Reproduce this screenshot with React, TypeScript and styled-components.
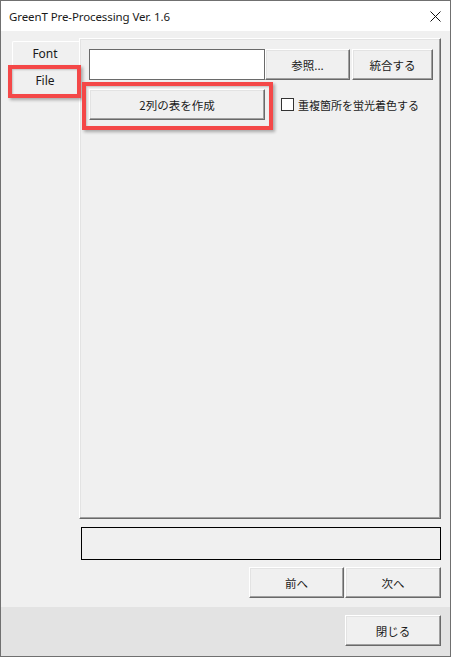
import React from "react";
import styled, { createGlobalStyle } from "styled-components";

const Global = createGlobalStyle`
  html, body { margin: 0; padding: 0; background: #ffffff; }
  * { box-sizing: border-box; }
  body { font-family: "Noto Sans", "Noto Sans CJK JP", sans-serif; }
`;

const Window = styled.div`
  position: relative;
  width: 451px;
  height: 657px;
  border: 1px solid #707070;
  display: flex;
  flex-direction: column;
  background: #f0f0f0;
  overflow: hidden;
`;

const TitleBar = styled.div`
  height: 30px;
  flex: none;
  background: #ffffff;
  display: flex;
  align-items: center;
  justify-content: space-between;
  padding: 0 9px 0 8px;
`;

const TitleText = styled.span`
  font-family: "Noto Sans", sans-serif;
  font-size: 11.5px;
  color: #1a1a1a;
  letter-spacing: -0.1px;
`;

const CloseGlyph = styled.svg`
  width: 11px;
  height: 11px;
  margin-right: 0px;
`;

const Main = styled.div`
  flex: 1;
  display: flex;
  flex-direction: column;
  padding: 7px 9px 0 11px;
`;

const TabControl = styled.div`
  height: 481px;
  display: flex;
`;

const TabStrip = styled.div`
  width: 67px;
  flex: none;
  display: flex;
  flex-direction: column;
  padding-top: 3px;
`;

const Tab = styled.div<{ $h: number; $raised?: boolean }>`
  height: ${(p) => p.$h}px;
  display: flex;
  align-items: center;
  justify-content: center;
  font-family: "Noto Sans", sans-serif;
  font-size: 12px;
  color: #1a1a1a;
  border-top: 1px solid ${(p) => (p.$raised ? "#ffffff" : "transparent")};
  border-left: 1px solid ${(p) => (p.$raised ? "#ffffff" : "transparent")};
  border-top-left-radius: 2px;
  padding-right: 2px;
`;

const Panel = styled.div`
  flex: 1;
  border-top: 1px solid #ffffff;
  border-left: 1px solid #ffffff;
  border-right: 1px solid #696969;
  border-bottom: 1px solid #696969;
  box-shadow: inset -1px -1px #a0a0a0, inset 1px 1px #e3e3e3;
  padding: 10px 0 0 9px;
  display: flex;
  flex-direction: column;
  gap: 9px;
`;

const Row = styled.div`
  display: flex;
  align-items: center;
`;

const TextBox = styled.div`
  width: 176px;
  height: 31px;
  background: #ffffff;
  border: 1px solid #6a6a6a;
`;

const Button = styled.button<{ $w: number; $ml?: number }>`
  width: ${(p) => p.$w}px;
  height: 31px;
  margin-left: ${(p) => p.$ml ?? 0}px;
  padding: 0;
  background: #f0f0f0;
  border: 1px solid;
  border-color: #ffffff #696969 #696969 #ffffff;
  box-shadow: inset -1px -1px #a0a0a0, inset 1px 1px #e3e3e3;
  font-family: "Noto Sans CJK JP", sans-serif;
  font-size: 11.5px;
  color: #1a1a1a;
  display: flex;
  align-items: center;
  justify-content: center;
`;

const CheckLabel = styled.label`
  display: flex;
  align-items: center;
  margin-left: 16px;
  font-family: "Noto Sans CJK JP", sans-serif;
  font-size: 11px;
  color: #1a1a1a;
`;

const CheckBox = styled.span`
  width: 13px;
  height: 13px;
  background: #ffffff;
  border: 1px solid #333333;
  margin-right: 4px;
`;

const StatusBox = styled.div`
  margin: 8px 0 0 69px;
  height: 33px;
  border: 1px solid #000000;
`;

const NavRow = styled.div`
  margin-top: 7px;
  display: flex;
  justify-content: flex-end;
  gap: 1px;
`;

const Footer = styled.div`
  height: 49px;
  flex: none;
  background: #e3e3e3;
  display: flex;
  justify-content: flex-end;
  align-items: flex-start;
  padding: 8px 9px 0 0;
`;

const Highlight = styled.div<{ $x: number; $y: number; $w: number; $h: number }>`
  position: absolute;
  left: ${(p) => p.$x}px;
  top: ${(p) => p.$y}px;
  width: ${(p) => p.$w}px;
  height: ${(p) => p.$h}px;
  border: 4px solid #f44848;
  box-shadow: 2px 2px 3px rgba(0, 0, 0, 0.3), inset 1px 1px 2px rgba(0, 0, 0, 0.2);
  pointer-events: none;
`;

export default function App() {
  return (
    <>
      <Global />
      <Window>
        <TitleBar>
          <TitleText>GreenT Pre-Processing Ver. 1.6</TitleText>
          <CloseGlyph viewBox="0 0 11 11">
            <path d="M0.5 0.5 L10.5 10.5 M10.5 0.5 L0.5 10.5" stroke="#111" strokeWidth="1" fill="none" />
          </CloseGlyph>
        </TitleBar>
        <Main>
          <TabControl>
            <TabStrip>
              <Tab $h={24} $raised>Font</Tab>
              <Tab $h={30}>File</Tab>
            </TabStrip>
            <Panel>
              <Row>
                <TextBox />
                <Button $w={85}>参照...</Button>
                <Button $w={81} $ml={2}>統合する</Button>
              </Row>
              <Row>
                <Button $w={176}>2列の表を作成</Button>
                <CheckLabel>
                  <CheckBox />
                  重複箇所を蛍光着色する
                </CheckLabel>
              </Row>
            </Panel>
          </TabControl>
          <StatusBox />
          <NavRow>
            <Button $w={95}>前へ</Button>
            <Button $w={96}>次へ</Button>
          </NavRow>
        </Main>
        <Footer>
          <Button $w={96}>閉じる</Button>
        </Footer>
        <Highlight $x={7} $y={64} $w={73} $h={33} />
        <Highlight $x={81} $y={81} $w={191} $h={48} />
      </Window>
    </>
  );
}
